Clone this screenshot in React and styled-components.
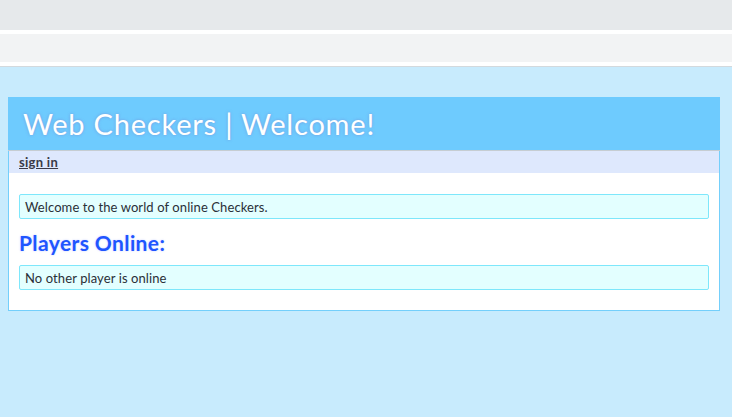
import React from "react";
import styled, { createGlobalStyle } from "styled-components";

const GlobalStyle = createGlobalStyle`
  html, body {
    margin: 0;
    padding: 0;
    background: #c8ebfd;
    font-family: Lato, "Open Sans", sans-serif;
  }
`;

const Chrome = styled.div`
  display: flex;
  flex-direction: column;
`;

const Strip = styled.div`
  height: ${(p) => p.h}px;
  background: ${(p) => p.bg};
`;

const Page = styled.div`
  padding: 30px 12px 0 8px;
`;

const Panel = styled.div`
  border: 1px solid #74cffb;
  border-top: none;
  background: #ffffff;
`;

const Header = styled.header`
  height: 53px;
  margin: 0 -1px;
  background: #6ecbfe;
  display: flex;
  align-items: center;
  padding-left: 15px;
  border-bottom: 1px solid #c6cdd2;
`;

const Title = styled.h1`
  margin: 0;
  font-size: 29px;
  font-weight: normal;
  color: #ffffff;
  letter-spacing: 0.8px;
  text-shadow: 0 0 3px rgba(120, 120, 200, 0.6);
`;

const Nav = styled.nav`
  height: 22px;
  background: #dee8fd;
  display: flex;
  align-items: center;
  padding-left: 10px;
`;

const NavLink = styled.a`
  font-size: 13px;
  font-weight: bold;
  letter-spacing: 0.3px;
  color: #3a3a48;
  text-decoration: underline;
`;

const Body = styled.div`
  padding: 21px 10px 20px;
  display: flex;
  flex-direction: column;
`;

const Message = styled.div`
  height: 23px;
  border: 1px solid #7ee7fb;
  border-radius: 2px;
  background: #e3ffff;
  display: flex;
  align-items: center;
  padding-left: 5px;
  font-size: 13px;
  letter-spacing: 0.1px;
  color: #2a3038;
`;

const Heading = styled.h2`
  margin: 12px 0 10px;
  font-size: 21px;
  line-height: 24px;
  font-weight: bold;
  letter-spacing: 0.4px;
  color: #1f55ff;
  text-shadow: 0 0 2px rgba(80, 110, 255, 0.35);
`;

export default function App() {
  return (
    <>
      <GlobalStyle />
      <Chrome>
        <Strip h={30} bg="#e6e9eb" />
        <Strip h={4} bg="#ffffff" />
        <Strip h={28} bg="#f2f3f4" />
        <Strip h={4} bg="#ffffff" />
        <Strip h={1} bg="#d3d9dd" />
      </Chrome>
      <Page>
        <Panel>
          <Header>
            <Title>Web Checkers | Welcome!</Title>
          </Header>
          <Nav>
            <NavLink href="#">sign in</NavLink>
          </Nav>
          <Body>
            <Message>Welcome to the world of online Checkers.</Message>
            <Heading>Players Online:</Heading>
            <Message>No other player is online</Message>
          </Body>
        </Panel>
      </Page>
    </>
  );
}
